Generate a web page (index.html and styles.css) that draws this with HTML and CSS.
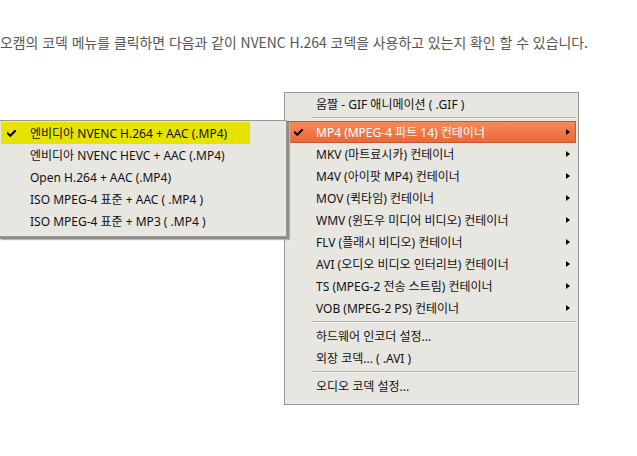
FILE: index.html
```html
<!DOCTYPE html>
<html lang="ko">
<head>
<meta charset="utf-8">
<link rel="stylesheet" href="styles.css">
</head>
<body>
<div class="page">
  <p class="intro">오캠의 코덱 메뉴를 클릭하면 다음과 같이 NVENC H.264 코덱을 사용하고 있는지 확인 할 수 있습니다.</p>

  <div class="menu main">
    <div class="item"><span class="chk"></span><span class="lbl">움짤 - GIF 애니메이션 ( .GIF )</span></div>
    <div class="sep"></div>
    <div class="item hot"><span class="chk"><svg class="tick" viewBox="0 0 9 7" width="9" height="7"><polyline points="0.8,3.4 3.3,5.8 8.2,0.8" /></svg></span><span class="lbl">MP4 (MPEG-4 파트 14) 컨테이너</span><span class="arr"></span></div>
    <div class="item"><span class="chk"></span><span class="lbl">MKV (마트료시카) 컨테이너</span><span class="arr"></span></div>
    <div class="item"><span class="chk"></span><span class="lbl">M4V (아이팟 MP4) 컨테이너</span><span class="arr"></span></div>
    <div class="item"><span class="chk"></span><span class="lbl">MOV (퀵타임) 컨테이너</span><span class="arr"></span></div>
    <div class="item"><span class="chk"></span><span class="lbl">WMV (윈도우 미디어 비디오) 컨테이너</span><span class="arr"></span></div>
    <div class="item"><span class="chk"></span><span class="lbl">FLV (플래시 비디오) 컨테이너</span><span class="arr"></span></div>
    <div class="item"><span class="chk"></span><span class="lbl">AVI (오디오 비디오 인터리브) 컨테이너</span><span class="arr"></span></div>
    <div class="item"><span class="chk"></span><span class="lbl">TS (MPEG-2 전송 스트림) 컨테이너</span><span class="arr"></span></div>
    <div class="item"><span class="chk"></span><span class="lbl">VOB (MPEG-2 PS) 컨테이너</span><span class="arr"></span></div>
    <div class="sep"></div>
    <div class="item"><span class="chk"></span><span class="lbl">하드웨어 인코더 설정...</span></div>
    <div class="item"><span class="chk"></span><span class="lbl">외장 코덱... ( .AVI )</span></div>
    <div class="sep"></div>
    <div class="item"><span class="chk"></span><span class="lbl">오디오 코덱 설정...</span></div>
  </div>

  <div class="menu sub">
    <div class="item mark"><span class="chk"><svg class="tick" viewBox="0 0 9 7" width="9" height="7"><polyline points="0.8,3.4 3.3,5.8 8.2,0.8" /></svg></span><span class="lbl">엔비디아 NVENC H.264 + AAC (.MP4)</span></div>
    <div class="item"><span class="chk"></span><span class="lbl">엔비디아 NVENC HEVC + AAC (.MP4)</span></div>
    <div class="item"><span class="chk"></span><span class="lbl">Open H.264 + AAC (.MP4)</span></div>
    <div class="item"><span class="chk"></span><span class="lbl">ISO MPEG-4 표준 + AAC ( .MP4 )</span></div>
    <div class="item"><span class="chk"></span><span class="lbl">ISO MPEG-4 표준 + MP3 ( .MP4 )</span></div>
  </div>
</div>
</body>
</html>
```

FILE: styles.css
```css
html, body {
  margin: 0;
  padding: 0;
  background: #ffffff;
}
.page {
  position: relative;
  width: 637px;
  height: 456px;
  overflow: hidden;
}
.intro {
  margin: 0;
  padding: 32px 0 0 0;
  font-family: "Noto Sans CJK KR", sans-serif;
  font-size: 13.9px;
  line-height: 20px;
  color: #555555;
  white-space: nowrap;
}
.menu {
  position: absolute;
  box-sizing: border-box;
  background: #e8e6e1;
  border: 1px solid #9a9894;
  font-family: "Noto Sans", "Noto Sans CJK KR", sans-serif;
  font-size: 12px;
  color: #111111;
  display: flex;
  flex-direction: column;
}
.main {
  left: 284px;
  top: 92px;
  width: 295px;
  height: 313px;
  padding: 0 2px 6px 2px;
}
.sub {
  left: -2px;
  top: 120px;
  width: 289px;
  height: 117px;
  padding: 1px 2px 0 2px;
  box-shadow: 2px 2px 0 #8e8c88, 3px 3px 1px #b8b6b2;
}
.item {
  box-sizing: border-box;
  height: 22px;
  display: flex;
  align-items: center;
  border: 1px solid transparent;
}
.chk {
  box-sizing: border-box;
  width: 25px;
  flex: none;
  display: flex;
  align-items: center;
  padding-left: 6px;
}
.sub .chk {
  padding-left: 5px;
}
.tick {
  display: block;
  fill: none;
  stroke: #000000;
  stroke-width: 2;
  stroke-linecap: square;
  stroke-linejoin: miter;
}
.lbl {
  flex: 1;
  white-space: nowrap;
  padding-left: 3px;
}
.arr {
  width: 0;
  height: 0;
  border-top: 3.5px solid transparent;
  border-bottom: 3.5px solid transparent;
  border-left: 4px solid #000000;
  margin-right: 5px;
}
.hot {
  background: linear-gradient(#f68a57, #e9693a);
  border-color: #c9572b;
  color: #ffffff;
}
.mark {
  background: #e6e300;
  margin-right: 34px;
}
.sep {
  height: 6px;
  margin-left: 25px;
  display: flex;
  align-items: center;
}
.sep::after {
  content: "";
  flex: 1;
  height: 1px;
  background: #b3b1ad;
  border-bottom: 1px solid #f6f5f2;
}
```
